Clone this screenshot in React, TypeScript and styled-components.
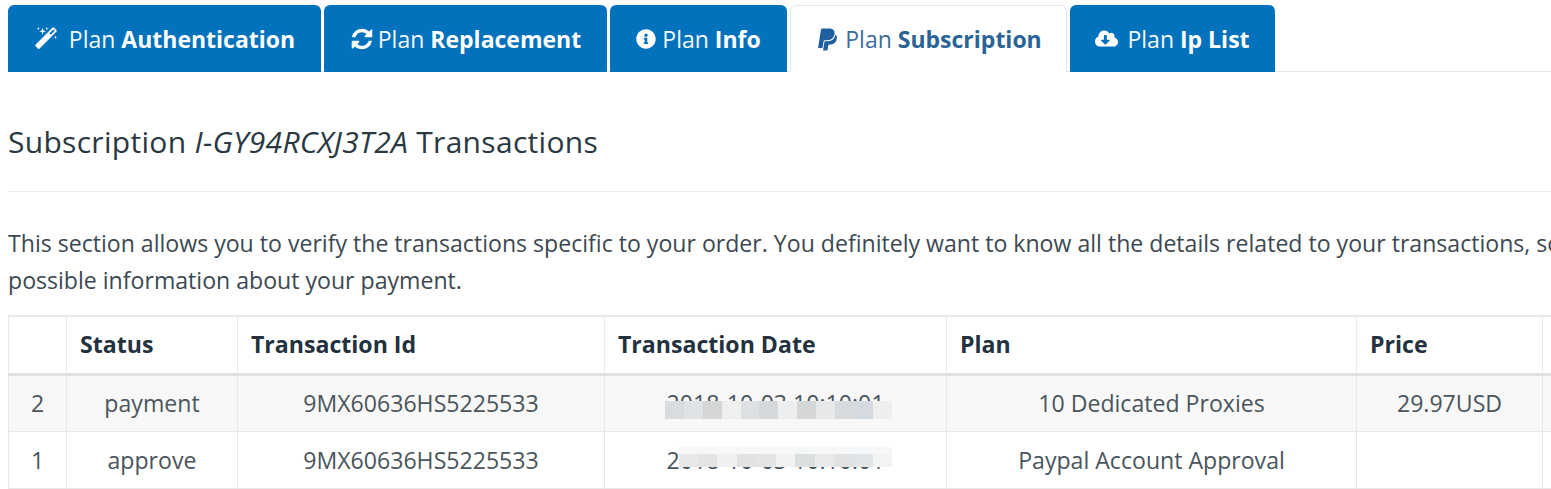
import React from 'react'
import styled, { createGlobalStyle } from 'styled-components'
import { FaInfoCircle, FaPaypal, FaCloudDownloadAlt } from 'react-icons/fa'

const GlobalStyle = createGlobalStyle`
  html, body {
    margin: 0;
    padding: 0;
    background: #fff;
    overflow: hidden;
  }
  body {
    font-family: "Open Sans", "Liberation Sans", sans-serif;
    color: #2f3d47;
  }
`

const Page = styled.div`
  width: 1551px;
  height: 489px;
  overflow: hidden;
  padding: 5px 0 0 8px;
  box-sizing: border-box;
`

const TabBar = styled.div`
  display: flex;
  gap: 3px;
  height: 67px;
  border-bottom: 1px solid #e4e7ea;
  box-sizing: border-box;
`

const Tab = styled.div<{ $active?: boolean; $width: number; $gap: number; $iconSize: number }>`
  width: ${p => p.$width}px;
  height: 67px;
  flex: none;
  box-sizing: border-box;
  display: flex;
  align-items: center;
  justify-content: center;
  gap: ${p => p.$gap}px;
  font-size: 23px;
  border-radius: 6px 6px 0 0;
  background: ${p => (p.$active ? '#fff' : '#0272bc')};
  color: ${p => (p.$active ? '#3c6d9e' : '#f2f8fc')};
  border: ${p => (p.$active ? '1px solid #e4e7ea' : 'none')};
  border-bottom: none;
  b {
    font-weight: 700;
    color: ${p => (p.$active ? '#2a6496' : '#fff')};
  }
  svg {
    width: ${p => p.$iconSize}px;
    height: ${p => p.$iconSize}px;
    flex: none;
    color: ${p => (p.$active ? '#1f5f9f' : '#fff')};
  }
`

const Heading = styled.h2`
  margin: 52px 0 0;
  font-size: 30px;
  line-height: 36px;
  font-weight: 400;
  color: #2a3842;
  letter-spacing: 0.3px;
  em {
    font-style: italic;
  }
`

const Divider = styled.hr`
  margin: 31px 0 0;
  border: none;
  border-top: 1px solid #e8eaec;
`

const Intro = styled.p`
  margin: 33px 0 0;
  font-size: 23.1px;
  line-height: 37px;
  white-space: nowrap;
  color: #3c4952;
`

const Table = styled.table`
  margin-top: 16px;
  width: 1640px;
  table-layout: fixed;
  border-collapse: collapse;
  font-size: 23.1px;
  border-top: 2px solid #e6e8ea;
`

const HeadCell = styled.th<{ $width: number }>`
  width: ${p => p.$width}px;
  height: 58px;
  padding: 0 13px 2px;
  box-sizing: border-box;
  text-align: left;
  font-weight: 700;
  color: #23323e;
  border: 1px solid #e8eaec;
  border-top: none;
  border-bottom: 3px solid #dfe2e4;
`

const Row = styled.tr<{ $shaded?: boolean }>`
  background: ${p => (p.$shaded ? '#f8f8f8' : '#fff')};
`

const Cell = styled.td`
  height: 57px;
  padding: 0 13px;
  box-sizing: border-box;
  text-align: center;
  color: #4a555c;
  border: 1px solid #e6e8ea;
  white-space: nowrap;
`

const DateText = styled.span`
  position: relative;
  display: inline-block;
`

const Mosaic = styled.span<{ $top: number; $left: number; $height: number }>`
  position: absolute;
  left: ${p => p.$left}px;
  right: -8px;
  top: ${p => p.$top}px;
  height: ${p => p.$height}px;
  display: flex;
  filter: blur(0.6px);
`

const Block = styled.span<{ $tone: string; $veil?: boolean }>`
  flex: 1;
  background: ${p =>
    p.$veil ? `linear-gradient(#f6f7f8 35%, ${p.$tone} 35%)` : p.$tone};
`

const MagicIcon = () => (
  <svg viewBox="0 0 1792 1792" fill="currentColor">
    <path d="M1254 581l293-293-107-107-293 293zm447-293q0 27-18 45l-1286 1286q-18 18-45 18t-45-18l-198-198q-18-18-18-45t18-45l1286-1286q18-18 45-18t45 18l198 198q18 18 18 45zm-1351-190l98 30-98 30-30 98-30-98-98-30 98-30 30-98zm350 162l196 60-196 60-60 196-60-196-196-60 196-60 60-196zm930 478l98 30-98 30-30 98-30-98-98-30 98-30 30-98zm-640-640l98 30-98 30-30 98-30-98-98-30 98-30 30-98z" />
  </svg>
)

const RefreshIcon = () => (
  <svg viewBox="0 0 1792 1792" fill="currentColor">
    <path d="M1639 1056q0 5-1 7-64 268-268 434.5t-478 166.5q-146 0-282.5-55t-243.5-157l-129 129q-19 19-45 19t-45-19-19-45v-448q0-26 19-45t45-19h448q26 0 45 19t19 45-19 45l-137 137q71 66 161 102t187 36q134 0 250-65t186-179q11-17 53-117 8-23 30-23h192q13 0 22.5 9.5t9.5 22.5zm25-800v448q0 26-19 45t-45 19h-448q-26 0-45-19t-19-45 19-45l138-138q-148-137-349-137-134 0-250 65t-186 179q-11 17-53 117-8 23-30 23h-199q-13 0-22.5-9.5t-9.5-22.5v-7q65-268 270-434.5t480-166.5q146 0 284 55.5t245 156.5l130-129q19-19 45-19t45 19 19 45z" />
  </svg>
)

const tabs = [
  { icon: <MagicIcon />, name: 'Authentication', width: 313, gap: 11, iconSize: 24 },
  { icon: <RefreshIcon />, name: 'Replacement', width: 283, gap: 4, iconSize: 24 },
  { icon: <FaInfoCircle />, name: 'Info', width: 177, gap: 6, iconSize: 20 },
  { icon: <FaPaypal />, name: 'Subscription', width: 277, gap: 5, iconSize: 25, active: true },
  { icon: <FaCloudDownloadAlt />, name: 'Ip List', width: 205, gap: 9, iconSize: 23 },
]

const columns = [
  { label: '', width: 58 },
  { label: 'Status', width: 171 },
  { label: 'Transaction Id', width: 367 },
  { label: 'Transaction Date', width: 342 },
  { label: 'Plan', width: 410 },
  { label: 'Price', width: 186 },
  { label: '', width: 106 },
]

const upperTones = ['#d8dcde', '#dfe3e6', '#d4d6d8', '#eef0f0', '#dde0e3', '#d6d9dc', '#eceef0', '#d4d6d7', '#e6e8ea', '#d8dbdd', '#d4dadf', '#eeeeee']
const lowerTones = ['#e6e8ea', '#e2e4e6', '#eff0f1', '#e0e2e4', '#e2e4e6', '#f1f2f3', '#dcdfe0', '#e8eaeb', '#e0e2e4', '#e2e5e7', '#f2f3f3']

const rows = [
  { no: 2, status: 'payment', plan: '10 Dedicated Proxies', price: '29.97USD', mosaic: { top: 14, left: -2, height: 18, tones: upperTones, veil: false } },
  { no: 1, status: 'approve', plan: 'Paypal Account Approval', price: '', mosaic: { top: 3, left: 12, height: 20, tones: lowerTones, veil: true } },
]

const App: React.FC = () => {
  return (
    <Page>
      <GlobalStyle />
      <TabBar>
        {tabs.map(t => (
          <Tab key={t.name} $active={t.active} $width={t.width} $gap={t.gap} $iconSize={t.iconSize}>
            {t.icon}
            <span>
              Plan <b>{t.name}</b>
            </span>
          </Tab>
        ))}
      </TabBar>
      <Heading>
        Subscription <em>I-GY94RCXJ3T2A</em> Transactions
      </Heading>
      <Divider />
      <Intro>
        This section allows you to verify the transactions specific to your order. You definitely want to know all the details related to your transactions, so
        <br />
        possible information about your payment.
      </Intro>
      <Table>
        <thead>
          <tr>
            {columns.map((c, i) => (
              <HeadCell key={i} $width={c.width}>
                {c.label}
              </HeadCell>
            ))}
          </tr>
        </thead>
        <tbody>
          {rows.map((r, i) => (
            <Row key={r.no} $shaded={i === 0}>
              <Cell>{r.no}</Cell>
              <Cell>{r.status}</Cell>
              <Cell>9MX60636HS5225533</Cell>
              <Cell>
                <DateText>
                  2018-10-03 10:10:01
                  <Mosaic $top={r.mosaic.top} $left={r.mosaic.left} $height={r.mosaic.height}>
                    {r.mosaic.tones.map((tone, k) => (
                      <Block key={k} $tone={tone} $veil={r.mosaic.veil} />
                    ))}
                  </Mosaic>
                </DateText>
              </Cell>
              <Cell>{r.plan}</Cell>
              <Cell>{r.price}</Cell>
              <Cell />
            </Row>
          ))}
        </tbody>
      </Table>
    </Page>
  )
}

export default App
